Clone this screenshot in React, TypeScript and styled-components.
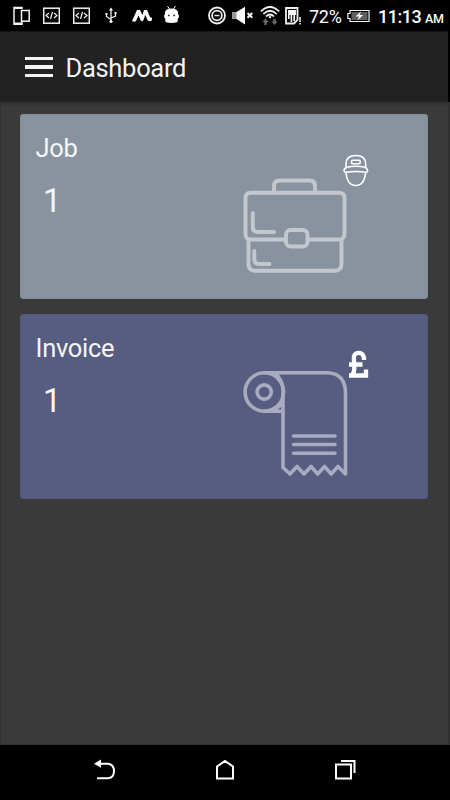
import React from "react";
import styled, { createGlobalStyle } from "styled-components";

const GlobalStyle = createGlobalStyle`
  * { box-sizing: border-box; }
  body { margin: 0; background: #000; font-family: Roboto, sans-serif; }
`;

const Screen = styled.div`
  width: 450px;
  height: 800px;
  display: flex;
  flex-direction: column;
  background: #000;
  overflow: hidden;
`;

const StatusBar = styled.header`
  height: 31px;
  display: flex;
  align-items: flex-start;
  color: #fff;
  flex: none;
`;

const StatusIcon = styled.svg<{ $gap: number }>`
  flex: none;
  height: 31px;
  margin-left: ${(p) => p.$gap}px;
  fill: none;
  stroke: #f2f2f2;
  stroke-width: 1.5;
`;

const StatusText = styled.span<{
  $gap: number;
  $width: number;
  $size: number;
  $weight?: number;
  $top?: number;
  $tracking?: number;
}>`
  flex: none;
  margin-left: ${(p) => p.$gap}px;
  margin-top: ${(p) => p.$top ?? 0}px;
  width: ${(p) => p.$width}px;
  font-size: ${(p) => p.$size}px;
  font-weight: ${(p) => p.$weight ?? 400};
  letter-spacing: ${(p) => p.$tracking ?? 0}px;
  line-height: 33px;
  white-space: nowrap;
`;

const AppBar = styled.div`
  width: 448px;
  height: 71px;
  flex: none;
  display: flex;
  align-items: center;
  padding: 1px 0 0 25px;
  background: #222;
  border-top: 1px solid #161616;
`;

const MenuButton = styled.button`
  display: flex;
  flex-direction: column;
  gap: 5px;
  width: 28px;
  height: 21px;
  padding: 0;
  margin-bottom: 1px;
  border: 0;
  background: none;
`;

const MenuLine = styled.span`
  height: 3.6px;
  background: #f5f5f5;
`;

const Title = styled.h1`
  margin: 0 0 0 12.5px;
  font-size: 25.5px;
  line-height: 32px;
  font-weight: 400;
  letter-spacing: -0.3px;
  color: #f3f3f3;
`;

const Content = styled.main`
  width: 450px;
  height: 643px;
  flex: none;
  display: flex;
  flex-direction: column;
  gap: 15px;
  padding: 12px 20px 0 19px;
  background: linear-gradient(#303030, #3a3a3a 6px);
  border-left: 1px solid #323232;
  border-right: 2px solid #303030;
  border-bottom: 1px solid #303030;
`;

const Card = styled.section<{ $color: string }>`
  height: 185px;
  flex: none;
  display: flex;
  justify-content: space-between;
  border-radius: 3px;
  background: ${(p) => p.$color};
  box-shadow: inset 0 0 1px rgba(0, 0, 0, 0.4);
`;

const CardText = styled.div`
  padding: 18px 0 0 15.5px;
  color: #f5f5f5;
`;

const CardName = styled.h2`
  margin: 0;
  font-size: 25.5px;
  line-height: 32px;
  font-weight: 400;
  letter-spacing: -0.3px;
`;

const Count = styled.div`
  margin: 17px 0 0 7.5px;
  font-size: 32.5px;
  line-height: 40px;
`;

const CardArt = styled.svg`
  width: 150px;
  height: 145px;
  margin: 26px 48px 0 0;
  fill: none;
  stroke-linecap: round;
  stroke-linejoin: round;
`;

const NavBar = styled.nav`
  flex: 1;
  display: flex;
  justify-content: center;
  gap: 90px;
  padding-top: 10px;
`;

const NavIcon = styled.svg`
  width: 30px;
  height: 30px;
  fill: none;
  stroke: #fff;
  stroke-width: 2;
`;

const CodeIcon = () => (
  <StatusIcon $gap={13} width="17" viewBox="0 0 17 31">
    <rect x="0.7" y="8.2" width="15.6" height="15" />
    <path d="M6 13l-3 2.5L6 18M11 13l3 2.5L11 18M9.5 12l-2 7" strokeWidth="1.2" />
  </StatusIcon>
);

const BriefcaseArt = () => (
  <CardArt viewBox="0 0 150 145">
    <g stroke="#c3c8cf" strokeWidth="3.9">
      <path d="M44 51V46Q44 40.5 50 40.5H79Q85 40.5 85 46V51" />
      <path d="M55 99.5H18.5Q15.5 98 15.5 93V58Q15.5 52.8 21 52.8H109Q114.5 52.8 114.5 58V93Q114.5 98 111 99.5H79" />
      <path d="M18.5 100V124Q18.5 130.7 25 130.7H105Q111.5 130.7 111.5 124V100" />
      <rect x="56" y="90" width="21.5" height="16.5" rx="4.5" />
      <path d="M22.8 73V87Q22.8 92 28 92H44M24.3 111V119Q24.3 124 29 124H39.5" />
    </g>
    <g stroke="#fff" strokeWidth="1.6">
      <path d="M116 28V24Q116 15.5 125.8 15.5T135.7 24V28" />
      <path d="M116 27.5Q126 25 135.8 27.5Q139 30.5 136.5 32.5Q126 30.5 115.2 32.5Q112.5 30 116 27.5ZM116 32Q117 45.5 125.8 45.5Q134.5 45.5 135.7 32" />
      <rect x="121.5" y="20.3" width="8.6" height="3.4" rx="1" />
    </g>
  </CardArt>
);

const ReceiptArt = () => (
  <CardArt viewBox="0 0 150 145">
    <g stroke="#a9abc2" strokeWidth="3.6">
      <circle cx="34.3" cy="52" r="19.2" />
      <circle cx="34.2" cy="52" r="7.1" />
      <path d="M34.3 32.8H98Q115.5 34 115.5 53V134L108 126.5L101.2 134L94.5 126.5L87.7 134L81 126.5L74 134L67 126.5L60 134L53 127.5V52M45 33.2Q52.5 39 53.5 52M34 71.2H52.5M45 69.5L53 63" />
      <path d="M63.5 96H105M63.5 104.5H105M63.5 113.2H105" />
    </g>
    <path
      d="M134 20V18Q133 12.8 129 12.8Q123.4 12.8 123.9 19L124.3 27Q124.6 33 121.5 35.3M119 24.5H132.5M119 35.5H136V29.5"
      stroke="#fff"
      strokeWidth="4.3"
      strokeLinecap="butt"
      strokeLinejoin="miter"
    />
  </CardArt>
);

export default function App() {
  return (
    <>
      <GlobalStyle />
      <Screen>
        <StatusBar>
          <StatusIcon $gap={13} width="17" viewBox="0 0 17 31">
            <path d="M9 9V7.5H1V24.2H9V22M1 8.3H9M1 23.3H9" />
            <rect x="8.5" y="10.5" width="7.7" height="10.7" />
          </StatusIcon>
          <CodeIcon />
          <CodeIcon />
          <StatusIcon $gap={15} width="12" viewBox="0 0 12 31">
            <path d="M6 10v11M1.5 14v2.5L6 19.5M10.5 13v3L6 18" strokeWidth="1.3" />
            <path d="M6 7.5l2 3H4zM0.5 13h2v2h-2zM9.5 12h2v2h-2z" fill="#fff" stroke="none" />
            <circle cx="6" cy="21.5" r="1.6" fill="#fff" stroke="none" />
          </StatusIcon>
          <StatusIcon $gap={15} width="20" viewBox="0 0 20 31">
            <path d="M0 21L5 10H8L10.5 15L12 10H15L18 17Q21 17.5 20 20Q18 22.5 15.5 20L13.3 15L11.5 20Q10 22.5 8.5 20L6.5 15.5L4 21Q2 22.5 0 21Z" fill="#fff" stroke="none" />
          </StatusIcon>
          <StatusIcon $gap={12} width="15" viewBox="0 0 15 31">
            <path d="M3.5 6l2 3M11.5 6l-2 3" strokeWidth="1" />
            <path d="M1 12Q2 8.5 7.5 8.5T14 12V14.5H14.8V18H14L13.5 22Q7.5 24 1.5 22L1 18H0.2V14.5H1Z" fill="#fff" stroke="none" />
            <path d="M4 15.5h1.6M9.4 15.5h1.6" stroke="#222" strokeWidth="1.4" />
          </StatusIcon>
          <StatusIcon $gap={29} width="18" viewBox="0 0 18 31">
            <circle cx="9" cy="15.5" r="8" strokeWidth="1.8" />
            <circle cx="9" cy="15.5" r="4.9" strokeWidth="1.7" />
            <path d="M6.5 15.5h5" />
          </StatusIcon>
          <StatusIcon $gap={6} width="21" viewBox="0 0 21 31">
            <path d="M0 12h5v7H0z" fill="#999" stroke="none" />
            <path d="M4.5 12L13 6.8V24.5L4.5 19z" fill="#fff" stroke="none" />
            <path d="M15.5 13l4.8 4.8M20.3 13l-4.8 4.8" strokeWidth="2" />
          </StatusIcon>
          <StatusIcon $gap={7} width="20" viewBox="0 0 20 31">
            <path d="M0.8 11.5Q10 2.5 19.2 11.5M3.3 14Q10 7.5 16.7 14M6 16.5Q10 12.5 14 16.5" strokeWidth="1.7" />
            <path d="M10 15.8l1.5 1.3L10 18.4 8.5 17.1z" fill="#fff" stroke="none" />
            <path d="M5.5 25v-4M14.5 19v4" stroke="#666" strokeWidth="2.5" />
            <path d="M2.3 22l3.2-3.5 3.2 3.5zM11.3 21.5l3.2 3.5 3.2-3.5z" fill="#666" stroke="none" />
          </StatusIcon>
          <StatusIcon $gap={5} width="16" viewBox="0 0 16 31">
            <path d="M1 8H12.5V20L9 23.5H1Z" strokeWidth="1.8" />
            <path d="M3 10h8v5H3zM3 15h1.6v4H3zM5.6 15h1.6v7H5.6zM8.4 15h1.6v6H8.4z" fill="#fff" stroke="none" />
            <path d="M15 17v5M15 23v1.5" />
          </StatusIcon>
          <StatusText $gap={8} $width={37} $size={18} $tracking={-0.3}>72%</StatusText>
          <StatusIcon $gap={1} width="23" viewBox="0 0 23 31">
            <path d="M3 10.5H22V21.5H3V18.5H0.8V13.5H3Z" strokeWidth="1.2" />
            <path d="M4.5 12h16v8h-16z" fill="#606060" stroke="none" />
            <path d="M14 11.5L8.5 16.5H12L10.5 20.5L16 15H12.5Z" fill="#fff" stroke="none" />
          </StatusIcon>
          <StatusText $gap={8} $width={46} $size={18} $weight={500} $tracking={-0.5}>11:13</StatusText>
          <StatusText $gap={1} $width={22} $size={12.5} $weight={500} $top={2} $tracking={-0.2}>AM</StatusText>
        </StatusBar>
        <AppBar>
          <MenuButton aria-label="Menu">
            <MenuLine />
            <MenuLine />
            <MenuLine />
          </MenuButton>
          <Title>Dashboard</Title>
        </AppBar>
        <Content>
          <Card $color="#8993a0">
            <CardText>
              <CardName>Job</CardName>
              <Count>1</Count>
            </CardText>
            <BriefcaseArt />
          </Card>
          <Card $color="#575d80">
            <CardText>
              <CardName>Invoice</CardName>
              <Count>1</Count>
            </CardText>
            <ReceiptArt />
          </Card>
        </Content>
        <NavBar>
          <NavIcon viewBox="0 0 30 30">
            <path d="M7 8.7H18Q24 9.5 24 16T18 23.3H7" />
            <path d="M4 8.7L11 4.5V12.8Z" fill="#fff" stroke="none" />
          </NavIcon>
          <NavIcon viewBox="0 0 30 30">
            <path d="M7 11.5L15 6L23 11.5V23.5H7Z" />
          </NavIcon>
          <NavIcon viewBox="0 0 30 30">
            <path d="M6 9.5H21V23.5H6ZM11 6H24.5V18" />
          </NavIcon>
        </NavBar>
      </Screen>
    </>
  );
}
